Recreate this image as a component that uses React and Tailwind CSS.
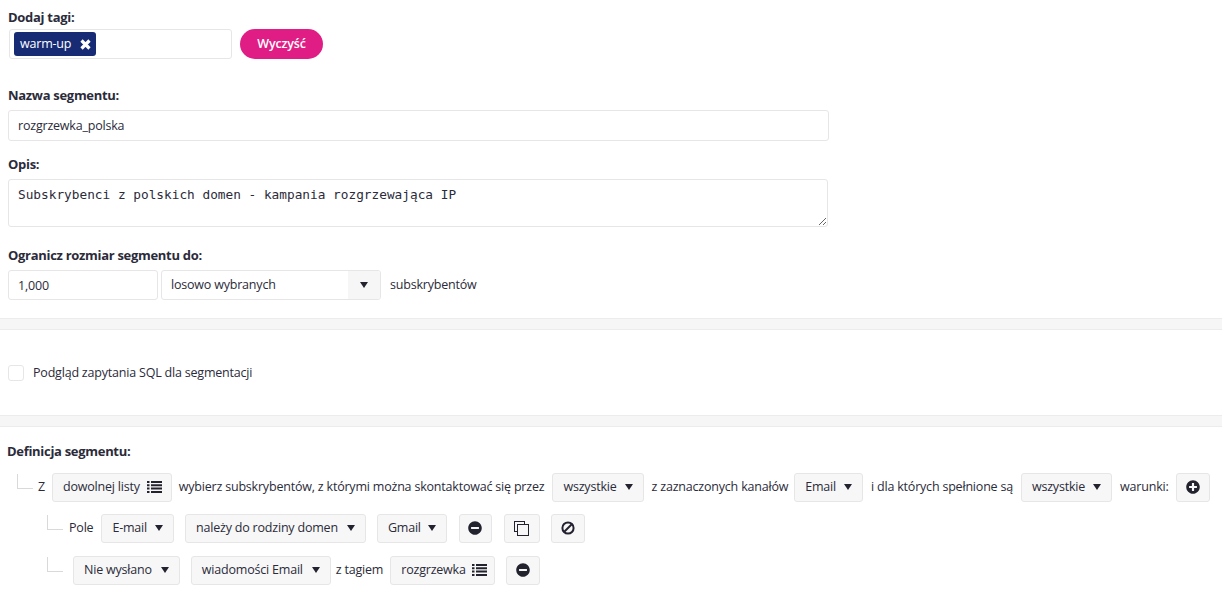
import React from "react";
import { FaMinusCircle, FaPlusCircle } from "react-icons/fa";

function Caret({ className = "" }) {
  return (
    <svg width="8" height="6" viewBox="0 0 8 6" className={"text-[#23232f] shrink-0 " + className}>
      <path d="M0 0H8L4 6Z" fill="currentColor" />
    </svg>
  );
}

// four-row list icon
function ListIcon({ className = "" }) {
  return (
    <svg width="15" height="12" viewBox="0 0 15 12" className={"shrink-0 " + className} fill="#23232f">
      <path d="M0 0h2.5v2H0zM4 0h11v2H4zM0 3.3h2.5v2H0zM4 3.3h11v2H4zM0 6.6h2.5v2H0zM4 6.6h11v2H4zM0 10h2.5v2H0zM4 10h11v2H4z" />
    </svg>
  );
}

function CloneIcon() {
  return (
    <svg width="15" height="15" viewBox="0 0 15 15" fill="none" stroke="#23232f" strokeWidth="1">
      <rect x="0.5" y="0.5" width="10" height="10" />
      <rect x="3.5" y="3.5" width="11" height="11" fill="#f7f7f7" />
    </svg>
  );
}

function BanIcon() {
  return (
    <svg width="14" height="14" viewBox="0 0 14 14" fill="none" stroke="#23232f" strokeWidth="2">
      <circle cx="7" cy="7" r="5.6" />
      <path d="M3 11L11 3" />
    </svg>
  );
}

function CloseIcon() {
  return (
    <svg width="11" height="11" viewBox="0 0 11 11" className="ml-[9px]" fill="none" stroke="white" strokeWidth="3.2">
      <path d="M1.5 1.5l8 8M9.5 1.5l-8 8" />
    </svg>
  );
}

function Btn({ children, className = "" }) {
  return (
    <div className={"h-[29px] flex items-center rounded-[3px] border border-[#e6e6e6] bg-[#f7f7f7] shrink-0 " + className}>
      {children}
    </div>
  );
}

function SelectBtn({ label, gap = "ml-[8px]", className = "" }) {
  return (
    <Btn className={"pl-[10px] pr-[10px] " + className}>
      {label}
      <Caret className={gap} />
    </Btn>
  );
}

function Label({ children, className = "" }) {
  return <div className={"font-bold text-[13px] tracking-[-0.3px] leading-[18px] " + className}>{children}</div>;
}

function Band() {
  return <div className="h-[12px] bg-[#f6f6f6] border-y border-[#ececec]" />;
}

function TreeLine() {
  return <div className="w-[16px] h-[15px] border-l border-b border-[#d9d9d9] shrink-0 self-start mt-[1px]" />;
}

export default function App() {
  return (
    <div className="w-[1222px] h-[597px] overflow-hidden bg-white text-[12.5px] text-[#2b2b3a] font-['Open_Sans','Noto_Sans',sans-serif] tracking-[-0.2px]">
      <div className="pl-[8px] pt-[8px]">
        <Label>Dodaj tagi:</Label>
        <div className="flex items-center mt-[3px] ml-[1px]">
          <div className="w-[223px] h-[30px] border border-[#e6e6e6] rounded-[3px] flex items-center pl-[4px]">
            <div className="h-[24px] w-[82px] bg-[#172b75] rounded-[3px] text-white flex items-center pl-[6px]">
              warm-up
              <CloseIcon />
            </div>
          </div>
          <button className="ml-[8px] w-[83px] h-[30px] rounded-full bg-[#e01c85] text-white font-semibold">Wyczyść</button>
        </div>

        <Label className="mt-[27px]">Nazwa segmentu:</Label>
        <input
          readOnly
          value="rozgrzewka_polska"
          className="block mt-[6px] w-[821px] h-[31px] border border-[#e6e6e6] rounded-[3px] px-[9px] pb-[1px] outline-none"
        />

        <Label className="mt-[14px]">Opis:</Label>
        <textarea
          readOnly
          value="Subskrybenci z polskich domen - kampania rozgrzewająca IP"
          className="block mt-[6px] w-[820px] h-[48px] border border-[#e6e6e6] rounded-[3px] px-[9px] py-[6px] outline-none font-['DejaVu_Sans_Mono',monospace] text-[12.78px] tracking-normal leading-[17px]"
        />

        <Label className="mt-[19px]">Ogranicz rozmiar segmentu do:</Label>
        <div className="flex items-center mt-[6px]">
          <input
            readOnly
            value="1,000"
            className="block w-[150px] h-[30px] border border-[#e6e6e6] rounded-[3px] px-[9px] outline-none"
          />
          <div className="ml-[3px] w-[220px] h-[30px] border border-[#e6e6e6] rounded-[3px] flex items-center justify-between pl-[9px] overflow-hidden">
            losowo wybranych
            <div className="w-[32px] h-full bg-[#f6f6f6] flex items-center justify-center">
              <Caret />
            </div>
          </div>
          <span className="ml-[9px]">subskrybentów</span>
        </div>
      </div>

      <div className="mt-[18px]">
        <Band />
      </div>

      <div className="flex items-center pl-[8px] mt-[34px]">
        <div className="w-[16px] h-[16px] border border-[#e6e6e6] rounded-[3px]" />
        <span className="ml-[9px]">Podgląd zapytania SQL dla segmentacji</span>
      </div>

      <div className="mt-[32px]">
        <Band />
      </div>

      <div className="pl-[7px] pt-[15px]">
        <Label>Definicja segmentu:</Label>

        <div className="flex items-center mt-[13px] ml-[10px] whitespace-nowrap">
          <TreeLine />
          <span className="ml-[5px]">Z</span>
          <Btn className="ml-[7px] pl-[10px] pr-[9px]">
            dowolnej listy
            <ListIcon className="ml-[7px]" />
          </Btn>
          <span className="ml-[7px]">wybierz subskrybentów, z którymi można skontaktować się przez</span>
          <SelectBtn label="wszystkie" className="ml-[8px]" />
          <span className="ml-[8px]">z zaznaczonych kanałów</span>
          <SelectBtn label="Email" className="ml-[6px]" />
          <span className="ml-[8px]">i dla których spełnione są</span>
          <SelectBtn label="wszystkie" className="ml-[8px]" />
          <span className="ml-[8px]">warunki:</span>
          <Btn className="ml-[7px] w-[34px] justify-center">
            <FaPlusCircle className="text-[14px] text-[#23232f]" />
          </Btn>
        </div>

        <div className="flex items-center mt-[12px] ml-[40px] whitespace-nowrap">
          <TreeLine />
          <span className="ml-[6px]">Pole</span>
          <SelectBtn label="E-mail" className="ml-[8px]" />
          <SelectBtn label="należy do rodziny domen" gap="ml-[9px]" className="ml-[11px]" />
          <SelectBtn label="Gmail" gap="ml-[7px]" className="ml-[11px]" />
          <Btn className="ml-[12px] w-[33px] justify-center">
            <FaMinusCircle className="text-[14px] text-[#23232f]" />
          </Btn>
          <Btn className="ml-[12px] w-[36px] justify-center">
            <CloneIcon />
          </Btn>
          <Btn className="ml-[11px] w-[34px] justify-center">
            <BanIcon />
          </Btn>
        </div>

        <div className="flex items-center mt-[13px] ml-[40px] whitespace-nowrap">
          <TreeLine />
          <SelectBtn label="Nie wysłano" gap="ml-[9px]" className="ml-[10px]" />
          <SelectBtn label="wiadomości Email" gap="ml-[9px]" className="ml-[11px]" />
          <span className="ml-[5px]">z tagiem</span>
          <Btn className="ml-[7px] pl-[10px] pr-[7px]">
            rozgrzewka
            <ListIcon className="ml-[6px]" />
          </Btn>
          <Btn className="ml-[11px] w-[34px] justify-center">
            <FaMinusCircle className="text-[14px] text-[#23232f]" />
          </Btn>
        </div>
      </div>
    </div>
  );
}
